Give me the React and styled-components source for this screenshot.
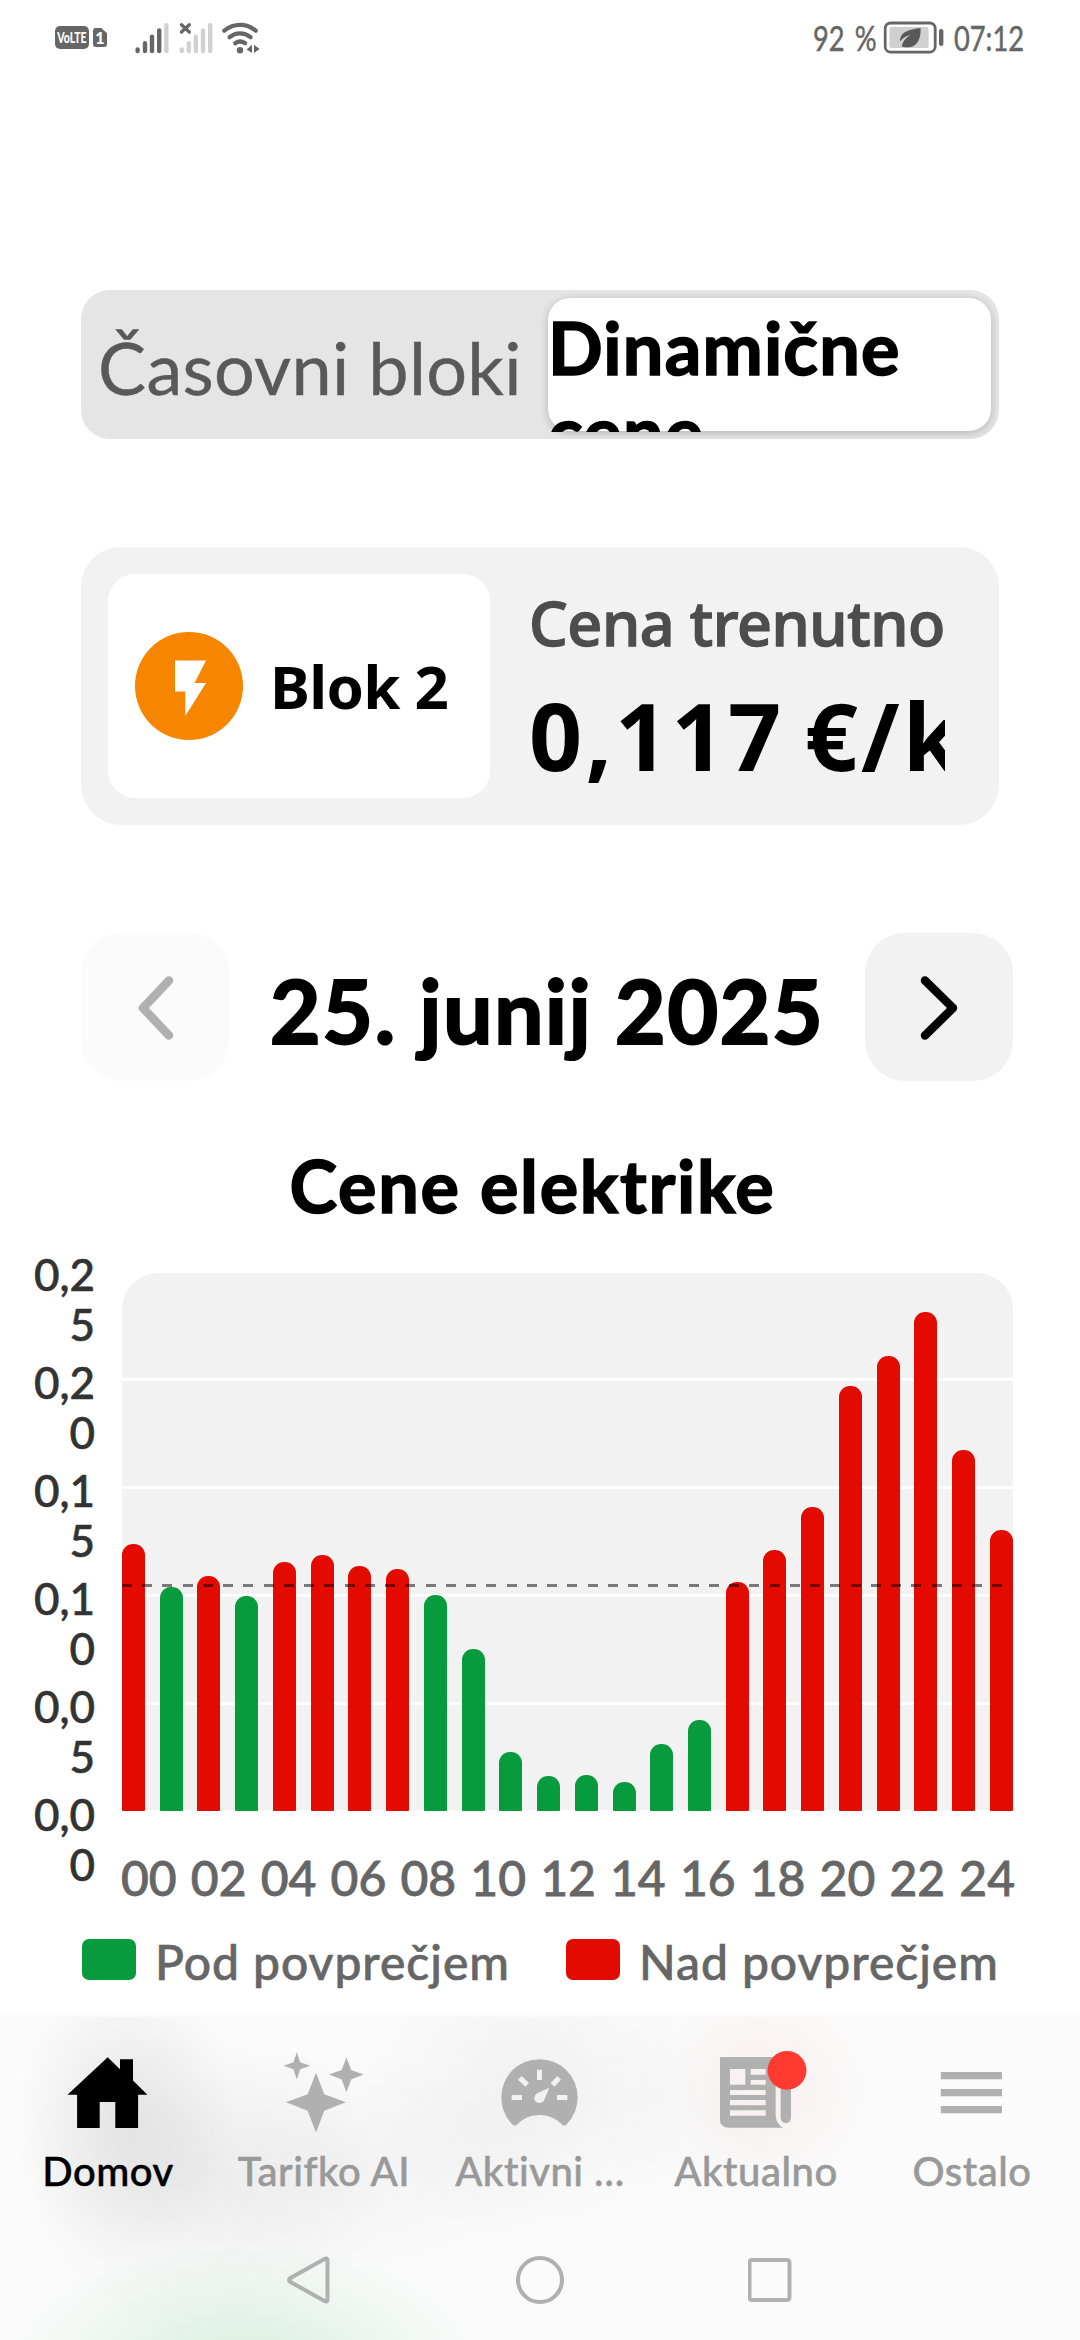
import { useState } from "react";
import styled, { createGlobalStyle } from "styled-components";

const GREEN = "#089b3e";
const RED = "#e30b00";
const MAX_PRICE = 0.25;
const PLOT_HEIGHT = 540;
const AVERAGE = 0.1045;

// €/kWh for every hour, "above" is decided against AVERAGE
const prices = [
  0.1236, 0.1037, 0.1088, 0.0995, 0.1154, 0.1184, 0.1134, 0.112, 0.1, 0.075,
  0.0273, 0.0162, 0.0167, 0.0134, 0.031, 0.0421, 0.106, 0.1208, 0.1407, 0.1968,
  0.2108, 0.231, 0.1671, 0.13,
];
const yLabels = ["0,25", "0,20", "0,15", "0,10", "0,05", "0,00"];
const xLabels = [
  "00", "02", "04", "06", "08", "10", "12", "14", "16", "18", "20", "22", "24",
];

function StatusIcons() {
  return (
    <svg width="128" height="34" viewBox="134 20 128 34">
      <g strokeWidth="4.4" strokeLinecap="round" stroke="#666">
        <path d="M137.6 48.5V50M145 42.2V50M152 35.8V50M159.2 29.5V50" />
        <path d="M166.4 24.2V50" stroke="#d1d1d1" />
        <path
          d="M181.8 48.5V50M188.8 42.2V50M195.8 35.8V50M203 29.5V50M210.2 24.2V50"
          stroke="#d1d1d1"
        />
        <path d="M181.5 23.7L189.3 31M189.3 23.7L181.5 31" strokeWidth="3.4" />
        <g fill="none" strokeWidth="4.2">
          <path d="M224.3 29.6Q231.5 23.8 240 23.8T255.7 29.6" />
          <path d="M229.6 36.2Q234.4 32.3 240 32.3T250.6 36.2" />
          <path d="M235.2 42.2Q240 38.8 245.2 42.2" />
        </g>
      </g>
      <circle cx="240" cy="49.2" r="3.2" fill="#666" />
      <path d="M246.6 48.4L252 43.8V52ZM254 43.8L259.6 48L254 52Z" fill="#666" />
    </svg>
  );
}

function BatteryIcon() {
  return (
    <svg width="61" height="34" viewBox="883 21 61 34">
      <rect x="885.2" y="23" width="50" height="29.2" rx="5.5" fill="none" stroke="#666" strokeWidth="2.8" />
      <rect x="889.4" y="27" width="39.2" height="21" rx="2" fill="#d0d0d0" />
      <rect x="939" y="29" width="4.4" height="17" rx="2.2" fill="#666" />
      <path
        d="M920.6 28C912 29.4 899.6 30.6 900 41.6Q903 36.8 910.6 35Q902.6 39.4 901.8 46.4C914.6 50.4 921.4 41.6 920.6 28Z"
        fill="#595959"
      />
    </svg>
  );
}

function BoltIcon() {
  return (
    <svg width="108" height="108" viewBox="0 0 108 108">
      <path d="M40 28.5H71L59.5 51H71L50.3 84V59.5H40Z" fill="white" />
    </svg>
  );
}

function HomeIcon() {
  return (
    <path d="M53.7 12.2L66 24.2V14.3H79V35.4L93.4 49.7H84.1V83H61.3V57H45.7V83H23.1V49.7H13.5Z" />
  );
}

function SparklesIcon() {
  return (
    <>
      <path d="M46 27.7L54.3 49.3L75.8 57.3L54.3 65.7L46 87.5L37.6 65.7L16 57.3L37.6 49.3Z" />
      <path d="M76.4 12.2L81.2 24.9L93.4 29.6L81.2 34.4L76.4 47.2L71.7 34.4L59 29.6L71.7 24.9Z" />
      <path d="M26.8 7.3L30.2 17.2L40.2 20.7L30.2 24.2L26.8 34.4L23.4 24.2L13.6 20.7L23.4 17.2Z" />
    </>
  );
}

function GaugeIcon() {
  return (
    <g transform="translate(4 0) scale(.3333)">
      <path
        fillRule="evenodd"
        d="M69 240Q74 244 80 239Q108 210 148.5 210T217 239Q223 244 228 240Q263 206 263 157A114.5 114.5 0 0 0 34 157Q34 206 69 240Z
          M141 74H156V105H141ZM65 150H96V165H65ZM201 150H232V165H201Z
          M84 104L95 93L117 114L106 125ZM202 93L213 104L193 125L182 114Z
          M178 128L164 162Q160 174 147 174Q133 172 133 158Q134 149 142 145Z"
      />
    </g>
  );
}

function NewsIcon() {
  return (
    <>
      <g transform="translate(8 0) scale(.3333)">
        <path
          fillRule="evenodd"
          d="M34 36H197V210Q199 240 220 248H54Q30 246 30 224V40Q30 36 34 36Z
            M60 72V119H106V72ZM122 72V89H167V72ZM122 105V119H167V105Z
            M60 135V150H167V135ZM60 165V181H167V165ZM60 196V212H167V196Z"
        />
        <path d="M212 100H243V219Q241 234 227.5 234T212 219Z" />
      </g>
      <circle cx="85" cy="25.4" r="19.4" fill="#ff3b30" />
    </>
  );
}

function MenuIcon() {
  return <path d="M22.8 27H84V34.2H22.8ZM22.8 44H84V51.2H22.8ZM22.8 61H84V68.2H22.8Z" />;
}

const tabs = [
  { name: "Domov", Icon: HomeIcon },
  { name: "Tarifko AI", Icon: SparklesIcon },
  { name: "Aktivni …", Icon: GaugeIcon },
  { name: "Aktualno", Icon: NewsIcon },
  { name: "Ostalo", Icon: MenuIcon },
];

function App() {
  const [mode, setMode] = useState("dynamic");
  const [tab, setTab] = useState("Domov");

  return (
    <Screen>
      <GlobalStyle />
      <StatusBar>
        <StatusGroup>
          <VolteBadge>
            <span>VoLTE</span>
          </VolteBadge>
          <SimBadge>1</SimBadge>
          <StatusIcons />
        </StatusGroup>
        <StatusGroup>
          <StatusText $width={76}>
            <span>92 %</span>
          </StatusText>
          <BatteryIcon />
          <StatusText $width={90}>
            <span>07:12</span>
          </StatusText>
        </StatusGroup>
      </StatusBar>

      <Content>
        <Segmented>
          <Segment $active={mode === "blocks"} onClick={() => setMode("blocks")}>
            <div>Časovni bloki</div>
          </Segment>
          <Segment $active={mode === "dynamic"} onClick={() => setMode("dynamic")}>
            <div>Dinamične cene</div>
          </Segment>
        </Segmented>

        <PriceCard>
          <Block>
            <BlockIcon>
              <BoltIcon />
            </BlockIcon>
            <BlockName>Blok 2</BlockName>
          </Block>
          <Price>
            <PriceLabel>Cena trenutno</PriceLabel>
            <PriceValue>0,117 €/kWh</PriceValue>
          </Price>
        </PriceCard>

        <DateNav>
          <NavButton disabled>
            <svg width="60" height="80" viewBox="0 0 60 80" fill="none">
              <path d="M44 13.5L18 41L44 68.5" stroke="#b0b0b0" strokeWidth="8.5" strokeLinecap="round" strokeLinejoin="round" />
            </svg>
          </NavButton>
          <DateText>25. junij 2025</DateText>
          <NavButton>
            <svg width="60" height="80" viewBox="0 0 60 80" fill="none">
              <path d="M16 13.5L44 41L16 68.5" stroke="black" strokeWidth="8.5" strokeLinecap="round" strokeLinejoin="round" />
            </svg>
          </NavButton>
        </DateNav>

        <ChartTitle>Cene elektrike</ChartTitle>
        <Chart>
          <YAxis>
            {yLabels.map((label) => (
              <YLabel key={label}>{label}</YLabel>
            ))}
          </YAxis>
          <div>
            <Plot>
              {prices.map((price, hour) => (
                <Bar
                  key={hour}
                  $above={price > AVERAGE}
                  style={{ height: (price / MAX_PRICE) * PLOT_HEIGHT }}
                />
              ))}
              <AverageLine />
            </Plot>
            <XAxis>
              {xLabels.map((label) => (
                <span key={label}>{label}</span>
              ))}
            </XAxis>
          </div>
        </Chart>
        <Legend>
          <LegendItem $color={GREEN}>Pod povprečjem</LegendItem>
          <LegendItem $color={RED}>Nad povprečjem</LegendItem>
        </Legend>
      </Content>

      <BottomBar>
        <Tabs>
          {tabs.map(({ name, Icon }) => (
            <Tab key={name} $active={tab === name} onClick={() => setTab(name)}>
              <svg width="108" height="90" viewBox="0 0 108 90">
                <Icon />
              </svg>
              <span>{name}</span>
            </Tab>
          ))}
        </Tabs>
        <SystemNav>
          <svg width="48" height="48" viewBox="0 0 48 48">
            <path d="M43.5 4.5V43.5Q43.5 46.5 40.5 45L6.5 26Q3.5 24 6.5 22L40.5 3Q43.5 1.5 43.5 4.5Z" />
          </svg>
          <svg width="48" height="48" viewBox="0 0 48 48">
            <circle cx="24" cy="24" r="22" />
          </svg>
          <svg width="48" height="48" viewBox="0 0 48 48">
            <rect x="1.5" y="4" width="40" height="40" rx="2.5" />
          </svg>
        </SystemNav>
      </BottomBar>
    </Screen>
  );
}

const GlobalStyle = createGlobalStyle`
  * {
    box-sizing: border-box;
  }
  body {
    margin: 0;
    background-color: white;
    font-family: Lato, "Open Sans", sans-serif;
  }
  svg {
    display: block;
    flex-shrink: 0;
  }
  button {
    border: none;
    padding: 0;
    font-family: inherit;
  }
`;

const Screen = styled.div`
  width: 1080px;
  height: 2340px;
  display: flex;
  flex-direction: column;
  overflow: hidden;
`;

const StatusBar = styled.div`
  height: 75px;
  padding: 0 46px 0 55px;
  display: flex;
  justify-content: space-between;
  color: #666666;
`;
const StatusGroup = styled.div`
  height: 75px;
  display: flex;
  align-items: center;
`;
const VolteBadge = styled.div`
  width: 34px;
  height: 23px;
  margin-right: 4px;
  border-radius: 5px;
  background-color: #666666;
  color: white;
  display: flex;
  align-items: center;
  justify-content: center;
  span {
    font-size: 15px;
    font-weight: 900;
    line-height: 23px;
    transform: scaleX(0.7);
  }
`;
const SimBadge = styled.div`
  width: 14px;
  height: 19px;
  margin-right: 27px;
  border-radius: 3px;
  background-color: #666666;
  clip-path: polygon(0 0, 60% 0, 100% 28%, 100% 100%, 0 100%);
  color: white;
  font-size: 16px;
  font-weight: 900;
  line-height: 19px;
  text-align: center;
`;
const StatusText = styled.div`
  width: ${(p) => p.$width}px;
  display: flex;
  justify-content: center;
  white-space: nowrap;
  span {
    font-size: 35px;
    line-height: 75px;
    word-spacing: 4px;
    transform: scaleX(0.78);
    -webkit-text-stroke: 0.5px;
  }
`;

const Content = styled.div`
  flex: 1;
  padding-top: 215px;
  min-height: 0;
`;

const Segmented = styled.div`
  width: 918px;
  height: 149px;
  margin-left: 81px;
  padding: 8px;
  border-radius: 29px;
  background-color: #e5e5e5;
  overflow: hidden;
  display: grid;
  grid-template-columns: 459px 443px;
`;
const Segment = styled.button`
  height: 133px;
  border-radius: 22px;
  text-align: left;
  font-size: 72px;
  background-color: ${(p) => (p.$active ? "white" : "transparent")};
  box-shadow: ${(p) => (p.$active ? "0 2px 9px rgba(0, 0, 0, 0.22)" : "none")};
  color: ${(p) => (p.$active ? "black" : "#595959")};
  font-weight: ${(p) => (p.$active ? 700 : 400)};
  div {
    height: 134px;
    padding: ${(p) => (p.$active ? "7px 0 0" : "27px 0 0 9px")};
    line-height: 84px;
    letter-spacing: ${(p) => (p.$active ? 1.2 : 0.3)}px;
    -webkit-text-stroke: ${(p) => (p.$active ? 1.6 : 0.4)}px;
    overflow: hidden;
  }
`;

const PriceCard = styled.div`
  width: 918px;
  height: 278px;
  margin: 108px 0 0 81px;
  padding: 27px;
  border-radius: 40px;
  background-color: #f2f2f2;
  display: flex;
  font-family: "Noto Sans", sans-serif;
`;
const Block = styled.div`
  width: 382px;
  height: 224px;
  padding-left: 27px;
  border-radius: 27px;
  background-color: white;
  display: flex;
  align-items: center;
`;
const BlockIcon = styled.div`
  width: 108px;
  height: 108px;
  border-radius: 50%;
  background-color: #f68500;
`;
const BlockName = styled.div`
  margin-left: 27px;
  font-size: 60px;
  font-weight: 700;
  letter-spacing: -0.7px;
`;
const Price = styled.div`
  width: 416px;
  margin-left: 39px;
  padding-top: 11px;
  overflow: hidden;
  white-space: nowrap;
`;
const PriceLabel = styled.div`
  color: #4d4d4d;
  font-size: 61px;
  font-weight: 500;
  line-height: 76px;
  letter-spacing: -0.4px;
  -webkit-text-stroke: 1.4px;
`;
const PriceValue = styled.div`
  margin-top: 16px;
  font-size: 93px;
  font-weight: 700;
  line-height: 117px;
  letter-spacing: 3.2px;
  word-spacing: -7px;
`;

const DateNav = styled.div`
  width: 932px;
  margin: 108px 0 0 81px;
  display: flex;
  align-items: center;
  justify-content: space-between;
`;
const NavButton = styled.button`
  width: 148px;
  height: 148px;
  border-radius: 40px;
  background-color: ${(p) => (p.disabled ? "#fbfbfb" : "#f2f2f2")};
  display: flex;
  align-items: center;
  justify-content: center;
`;
const DateText = styled.div`
  padding-top: 6px;
  font-size: 88px;
  font-weight: 700;
  letter-spacing: 1.3px;
  -webkit-text-stroke: 2px;
`;

const ChartTitle = styled.div`
  margin-top: 60px;
  padding-right: 15px;
  font-size: 72px;
  font-weight: 700;
  line-height: 88px;
  letter-spacing: 1.7px;
  text-align: center;
  -webkit-text-stroke: 1.6px;
`;
const Chart = styled.div`
  margin-top: 19px;
  padding-left: 31px;
  display: grid;
  grid-template-columns: 64px 891px;
  column-gap: 27px;
`;
const YAxis = styled.div`
  padding-top: 1px;
  display: grid;
  grid-auto-rows: 108px;
`;
const YLabel = styled.div`
  color: #333333;
  font-size: 44px;
  font-weight: 500;
  line-height: 50px;
  text-align: right;
  word-break: break-all;
  -webkit-text-stroke: 0.6px;
`;
const Plot = styled.div`
  position: relative;
  height: 538px;
  margin-top: 25px;
  border-radius: 36px 36px 0 0;
  background: repeating-linear-gradient(
    #f2f2f2 0 105px,
    white 105px 108px
  );
  display: flex;
  align-items: flex-end;
  justify-content: space-between;
`;
const Bar = styled.div`
  width: 23px;
  border-radius: 11px 11px 1px 1px;
  background-color: ${(p) => (p.$above ? RED : GREEN)};
`;
const AverageLine = styled.div`
  position: absolute;
  left: 0;
  right: 0;
  top: 311px;
  height: 3px;
  background: repeating-linear-gradient(
    to right,
    rgba(0, 0, 0, 0.5) 0 10px,
    transparent 10px 20.24px
  );
`;
const XAxis = styled.div`
  margin: 38px -2px 0 -1px;
  color: #666666;
  font-size: 48px;
  font-weight: 500;
  line-height: 58px;
  display: flex;
  justify-content: space-between;
  -webkit-text-stroke: 0.8px;
`;

const Legend = styled.div`
  margin: 26px 0 0 82px;
  display: flex;
`;
const LegendItem = styled.div`
  width: 484px;
  color: #666666;
  font-size: 48px;
  font-weight: 500;
  line-height: 58px;
  letter-spacing: 0.95px;
  white-space: nowrap;
  display: flex;
  -webkit-text-stroke: 0.6px;
  &::before {
    content: "";
    width: 54px;
    height: 41px;
    margin: 6px 19px 0 0;
    border-radius: 7px;
    background-color: ${(p) => p.$color};
  }
`;

const BottomBar = styled.div`
  height: 323px;
  flex-shrink: 0;
  padding-top: 28px;
  box-shadow: 0 -1px 5px rgba(0, 0, 0, 0.04);
  background:
    radial-gradient(240px 120px at 245px 345px, rgba(205, 234, 214, 0.75), transparent),
    radial-gradient(110px 150px at 125px 100px, rgba(0, 0, 0, 0.08), transparent),
    radial-gradient(190px 160px at 200px 165px, rgba(0, 0, 0, 0.045), transparent),
    radial-gradient(230px 120px at 330px 150px, rgba(0, 0, 0, 0.035), transparent),
    radial-gradient(170px 150px at 530px 75px, rgba(0, 0, 0, 0.045), transparent),
    radial-gradient(100px 110px at 770px 60px, rgba(255, 190, 180, 0.12), transparent),
    radial-gradient(150px 120px at 735px 90px, rgba(0, 0, 0, 0.025), transparent),
    #fbfbfb;
`;
const Tabs = styled.div`
  display: grid;
  grid-template-columns: repeat(5, 216px);
`;
const Tab = styled.div`
  display: flex;
  flex-direction: column;
  align-items: center;
  color: ${(p) => (p.$active ? "black" : "#999999")};
  svg {
    fill: ${(p) => (p.$active ? "black" : "#b0b0b0")};
  }
  span {
    margin-top: 12px;
    font-size: 40px;
    font-weight: 500;
    line-height: 48px;
    letter-spacing: 0.5px;
    -webkit-text-stroke: 0.5px;
  }
`;
const SystemNav = styled.div`
  margin-top: 61px;
  display: flex;
  justify-content: center;
  gap: 184px;
  svg {
    fill: none;
    stroke: #b0b0b0;
    stroke-width: 4;
  }
`;

export default App;
